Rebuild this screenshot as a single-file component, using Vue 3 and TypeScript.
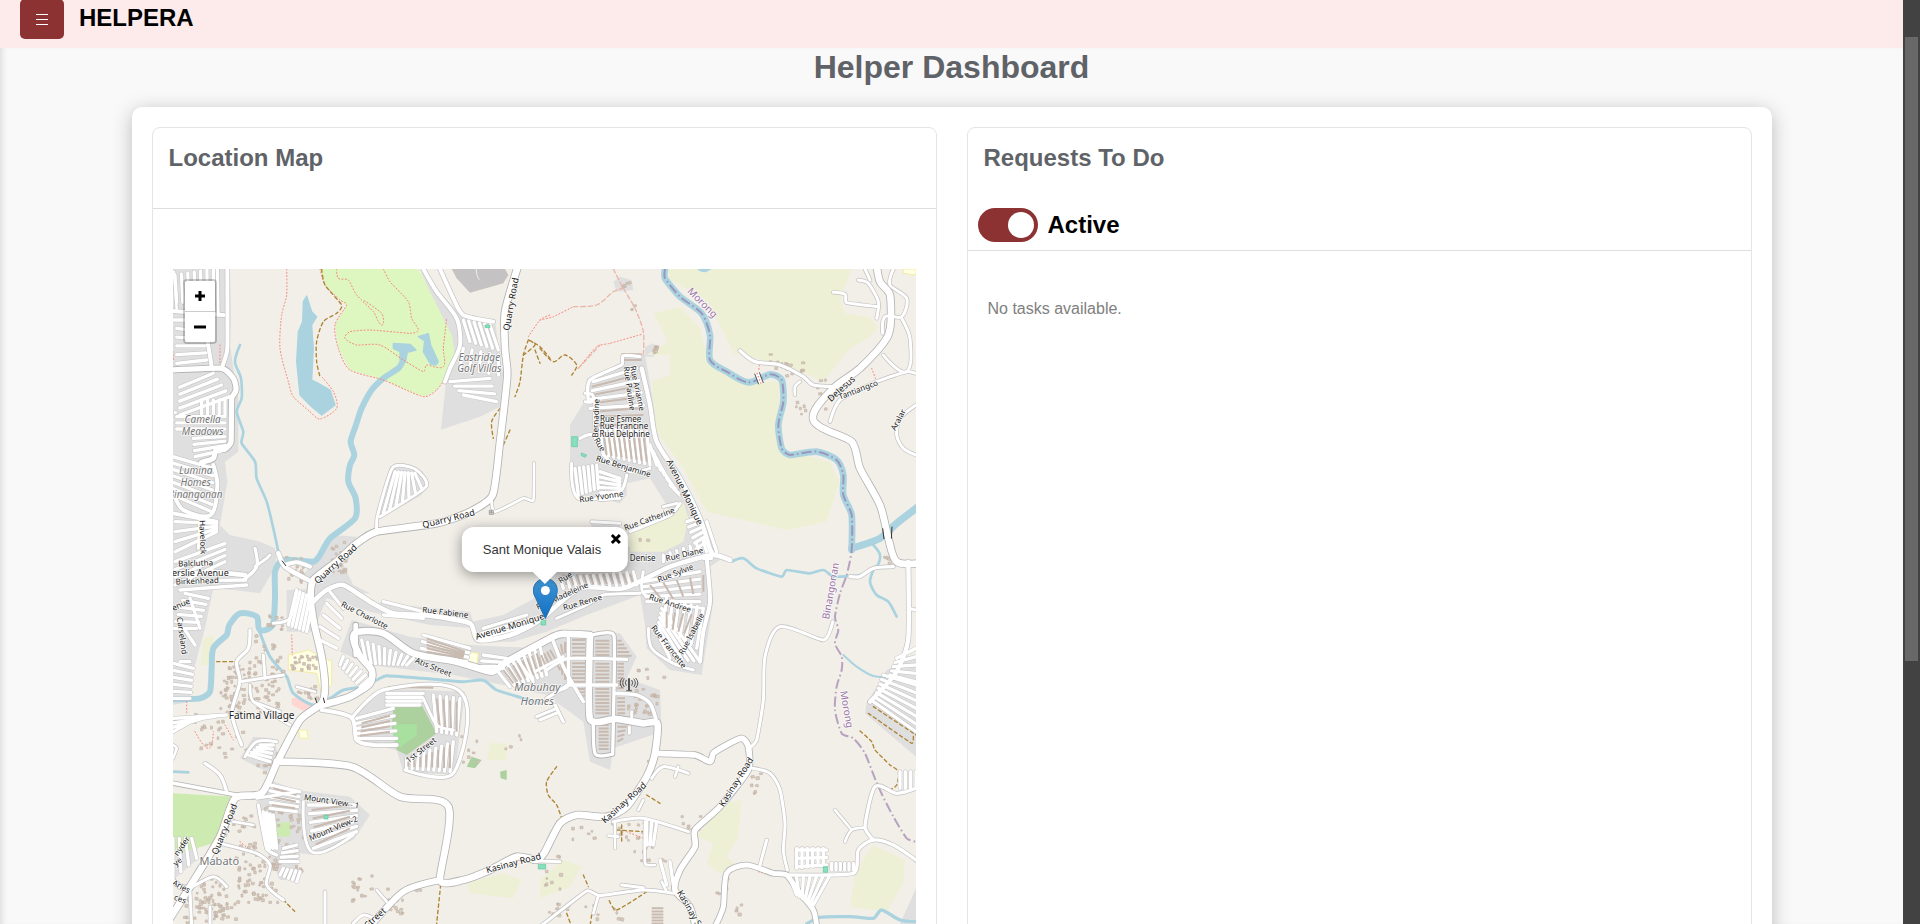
<script setup lang="ts">
import { ref } from 'vue'

type Pt = [number, number]
interface Line { d: string; w: number }
interface Label { t: string; x: number; y: number; r?: number; c?: string }

const active = ref(true)
const popupOpen = ref(true)

const parse = (s: string): Pt[] => s.trim().split(/\s+/).map(p => p.split(',').map(Number) as Pt)

/* Smooth curve through a list of points; tangents are limited by the shorter neighbouring segment */
function curve(s: string): string {
  const p = parse(s)
  const tangent = (i: number): Pt => {
    if (i === 0 || i === p.length - 1) return [0, 0]
    const a = p[i - 1], b = p[i], c = p[i + 1]
    const len = Math.hypot(c[0] - a[0], c[1] - a[1]) || 1
    const k = 0.28 * Math.min(Math.hypot(b[0] - a[0], b[1] - a[1]), Math.hypot(c[0] - b[0], c[1] - b[1])) / len
    return [(c[0] - a[0]) * k, (c[1] - a[1]) * k]
  }
  let d = `M${p[0][0]} ${p[0][1]}`
  for (let i = 0; i < p.length - 1; i++) {
    const b = p[i], c = p[i + 1], u = tangent(i), v = tangent(i + 1)
    d += `C${b[0] + u[0]} ${b[1] + u[1]} ${c[0] - v[0]} ${c[1] - v[1]} ${c[0]} ${c[1]}`
  }
  return d
}

/* n parallel segments spread between side a-b and side d-c of a quadrilateral */
function hatch(s: string, n: number): string {
  const [a, b, c, e] = parse(s)
  let d = ''
  for (let i = 0; i < n; i++) {
    const t = n === 1 ? 0.5 : i / (n - 1)
    d += `M${a[0] + (b[0] - a[0]) * t} ${a[1] + (b[1] - a[1]) * t}L${e[0] + (c[0] - e[0]) * t} ${e[1] + (c[1] - e[1]) * t}`
  }
  return d
}

let seed = 7
const rnd = () => (seed = (seed * 16807) % 2147483647) / 2147483647
function scatter(x: number, y: number, w: number, h: number, n: number): string {
  let d = ''
  for (let i = 0; i < n; i++) {
    const px = Math.round(x + rnd() * w), py = Math.round(y + rnd() * h)
    const a = 5 + Math.round(rnd() * 5), b = 5 + Math.round(rnd() * 4), k = Math.round(rnd() * 4) - 2
    d += `M${px} ${py}l${a} ${k}l${-k} ${b}l${-a} ${-k}z`
  }
  return d
}

const residential: string[] = [
  '9,12 180,12 182,150 180,240 190,310 205,400 205,560 165,590 172,650 150,780 180,810 270,830 315,850 320,900 290,950 270,985 190,975 130,970 105,1090 75,1200 60,1310 9,1320',
  '750,12 870,150 975,170 1000,330 990,425 930,455 813,494 830,330 855,270 840,210 790,110',
  '660,603 740,610 772,660 755,690 630,760 622,750',
  '490,810 560,815 520,900 550,960 600,985 430,985 400,930',
  '1355,265 1425,270 1455,440 1470,540 1530,620 1600,780 1650,880 1570,900 1490,720 1440,640 1370,655 1370,690 1350,715 1290,700 1220,690 1200,590 1200,480 1250,400 1250,340 1350,310',
  '1260,765 1350,770 1350,840 1400,850 1600,790 1650,885 1620,905 1630,1010 1595,1230 1500,1215 1430,1150 1425,1080 1410,990 1250,1050 1130,1100 1030,1130 920,1135 905,1070 1000,1050 1130,980 1150,920 1290,900',
  '1110,1120 1170,1100 1350,1105 1400,1175 1370,1240 1470,1275 1475,1400 1330,1450 1320,1515 1260,1490 1240,1370 1130,1290 1090,1240',
  '545,1065 720,1115 900,1140 1110,1150 1130,1290 1000,1260 850,1230 600,1200 510,1160',
  '540,1355 640,1270 885,1280 855,1530 700,1520 680,1455 560,1430',
  '300,1545 380,1575 540,1595 600,1650 550,1725 430,1770 390,1765 380,1845 330,1845 280,1735 260,1615',
  '9,1715 60,1700 85,1735 80,1785 9,1845',
  '2090,1315 2150,1215 2238,1170 2238,1475 2085,1345',
  '2238,1870 2190,1977 2238,1977',
  '210,1480 250,1415 310,1420 330,1490 290,1520',
  '1330,50 1350,35 1385,45 1390,75 1340,80',
  '1425,245 1450,235 1465,255 1450,275 1425,275',
  '350,975 500,970 600,1010 900,1040 915,1090 780,1080 600,1040 470,1000 430,1100 350,1100',
]
const farmland: string[] = [
  '1490,12 2045,12 2010,100 2025,145 2100,155 2125,190 2100,215 2040,250 2000,300 1960,350 1850,300 1690,265 1650,180 1600,100 1500,45',
  '1450,145 1530,125 1590,190 1615,290 1730,350 1830,350 1825,550 1980,590 2008,650 1970,770 1850,795 1610,740 1540,610 1460,500 1445,350 1500,330 1500,270 1430,270 1495,230',
  '1540,710 1555,760 1540,830 1480,860 1380,860 1380,790 1510,740',
  '1660,1615 1715,1605 1705,1715 1670,1775 1705,1805 1650,1825 1610,1795 1630,1735 1580,1715',
  '2110,1740 2205,1785 2200,1855 2150,1940 2040,1925 2055,1825',
  '890,1855 1000,1825 1055,1845 1030,1900 900,1885',
  '1110,1845 1180,1785 1235,1805 1200,1865 1110,1900',
  '960,1435 1010,1435 1010,1485 950,1485',
  '100,1120 135,1110 115,1200 92,1200',
]
const schools: string[] = [
  '355,1170 415,1155 485,1190 485,1260 455,1290 440,1225 355,1215',
  '890,1160 925,1165 920,1210 890,1200',
  '385,1395 410,1395 415,1420 390,1420',
  '2200,12 2238,12 2238,30 2200,25',
]
const golf = '450,12 745,12 760,40 845,210 855,270 825,340 800,375 765,395 720,380 640,345 540,315 505,250 495,180 530,120 510,105 465,60'
const grass = ['9,1585 195,1595 130,1735 9,1770', '320,1675 360,1670 360,1715 320,1715']
const woods = ['670,1325 755,1320 800,1405 710,1470 680,1455 665,1385', '905,1475 935,1485 915,1510 890,1505', '990,1520 1010,1515 1010,1545 992,1540']
const courts = ['1205,515 1222,515 1222,545 1205,545', '1113,1065 1127,1065 1127,1080 1113,1080', '462,1651 474,1651 474,1662 462,1662', '1105,1798 1127,1798 1127,1812 1105,1812', '1960,1805 1973,1805 1973,1822 1960,1822', '945,180 960,180 960,188 945,188', '1234,564 1250,570 1246,577 1234,572']
const ponds = [
  '410,93 425,140 440,155 425,180 430,250 425,345 445,355 480,375 495,420 455,450 425,425 390,390 380,290 385,200 398,170 400,110',
  '670,235 720,238 738,255 712,262 706,292 690,285 690,260 670,250',
  '745,215 762,210 775,205 782,240 805,290 798,300 782,298 760,260 764,228',
]

const rivers: Line[] = [
  { w: 18, d: '700,285 685,310 640,340 605,375 575,430 558,480 542,530 553,570 540,600 535,650 557,700 555,760 480,820 450,870 430,890 340,885 315,920 315,1000 308,1080 270,1095 260,1055 210,1045 178,1080 170,1110 130,1150 125,1210 120,1280 90,1300 9,1303' },
  { w: 8, d: '210,240 195,290 213,340 215,400 200,440 220,500 215,535 255,590 260,640 290,710 310,790 325,860' },
  { w: 9, d: '265,1090 300,1175 350,1235 370,1285 430,1320 480,1300 520,1275 575,1265 620,1245 650,1232 760,1240 880,1250 940,1246 980,1275 1060,1300 1110,1315' },
  { w: 20, d: '1485,12 1485,40 1530,95 1595,145 1620,210 1620,285 1670,320 1735,352 1800,328 1835,345 1840,410 1825,480 1835,550 1860,570 1940,560 2000,585 2020,630 2020,690 2045,750 2045,855' },
  { w: 22, d: '2045,850 2130,820 2180,775 2245,725' },
  { w: 8, d: '1685,890 1720,880 1760,910 1835,935 1850,915 1920,925 1960,915 1990,935 2070,930 2120,905 2130,870 2110,840' },
  { w: 8, d: '2115,905 2100,950 2120,990 2155,1010 2180,1055' },
  { w: 6, d: '2020,1170 2060,1205 2110,1233 2170,1237' },
  { w: 10, d: '1910,1977 1950,1957 2040,1955 2110,1960 2135,1935 2190,1965 2238,1970' },
  { w: 8, d: '9,1520 55,1522' },
  { w: 12, d: '1590,12 1605,16 1620,8' },
]
const border = '1485,12 1485,40 1530,95 1595,145 1620,210 1620,285 1670,320 1735,352 1800,328 1835,345 1840,410 1825,480 1835,550 1860,570 1940,560 2000,585 2020,630 2020,690 2045,750 2045,855 2030,930 2010,985 1995,1055 2005,1095 1995,1135 2015,1175 2015,1215 2000,1265 1995,1335 2015,1405 2050,1420 2085,1465 2125,1565 2170,1655 2210,1720 2238,1730'

const roads: Line[] = [
  { w: 12, d: '760,12 800,80 860,160 870,240 840,310 825,350' },
  { w: 12, d: '810,12 850,100 880,150 970,170' },
  { w: 12, d: '172,12 172,250 155,310' }, { w: 10, d: '142,12 144,150' },
  { w: 12, d: '108,200 125,305' }, { w: 12, d: '9,138 160,150' }, { w: 10, d: '9,165 60,165' }, { w: 8, d: '12,20 20,130' },
  { w: 12, d: '130,600 142,660 122,750 40,735 12,690' }, { w: 11, d: '9,745 140,770' }, { w: 9, d: '90,770 85,850' },
  { w: 10, d: '220,945 260,905 255,850' }, { w: 9, d: '255,905 290,880 300,870' }, { w: 14, d: '110,918 225,930' },
  { w: 14, d: '325,865 345,905 415,945' }, { w: 12, d: '345,900 380,892 420,905' },
  { w: 9, d: '620,800 622,755 668,608 735,612 768,665 630,755' },
  { w: 10, d: '1255,405 1260,345 1355,300 1360,272 1410,275' }, { w: 9, d: '1245,385 1268,390 1268,410 1245,410' },
  { w: 9, d: '1275,400 1275,490 1290,540' },
  { w: 13, d: '1415,310 1440,420 1460,530 1530,640 1590,760 1625,870' },
  { w: 9, d: '1230,520 1270,510 1310,580 1380,620 1440,610' },
  { w: 9, d: '1205,595 1225,700 1350,680 1370,630' }, { w: 8, d: '1290,705 1350,700' },
  { w: 9, d: '1265,770 1350,775' }, { w: 10, d: '1380,800 1500,750 1530,715' }, { w: 9, d: '1480,725 1520,715' },
  { w: 14, d: '430,1010 470,975 520,960 600,1010 670,1045 780,1052 900,1075 925,1125 1020,1110 1110,1065 1230,970 1360,970 1500,905 1625,870 1680,885' },
  { w: 9, d: '1160,1060 1250,1020 1300,990 1410,985' },
  { w: 9, d: '1420,920 1420,985 1500,1015 1600,1030' }, { w: 9, d: '1435,1090 1445,1150 1510,1195 1570,1215' },
  { w: 12, d: '1610,880 1620,1010 1600,1100 1590,1190' },
  { w: 10, d: '1710,257 1755,290 1830,300 1900,335 1930,360 1995,365' },
  { w: 8, d: '1890,350 1875,365 1875,390' },
  { w: 9, d: '1990,82 2025,88 2030,113 2125,125' }, { w: 9, d: '2065,45 2095,55 2125,110 2120,160' },
  { w: 9, d: '2085,12 2100,45' }, { w: 9, d: '2170,12 2160,60 2210,100 2195,155 2145,155 2138,205' },
  { w: 9, d: '2195,160 2220,220 2210,320 2140,270' }, { w: 9, d: '2238,325 2210,320 2120,350 2010,405 1980,470' },
  { w: 9, d: '2238,420 2190,460 2180,510 2200,550 2238,570' },
  { w: 10, d: '2040,935 2070,935 2110,910 2170,905' },
  { w: 13, d: '2215,890 2215,1120 2180,1220 2100,1310' }, { w: 9, d: '2215,1030 2238,1035' },
  { w: 9, d: '1988,1070 1960,1125 1830,1085 1785,1175 1780,1305 1760,1425 1738,1450' },
  { w: 9, d: '1740,1508 1800,1525 1830,1575 1845,1675 1840,1755 1852,1815' },
  { w: 10, d: '1850,1830 2050,1825 2065,1755 2110,1725 2170,1740 2238,1785' },
  { w: 10, d: '2110,1725 2085,1685 2115,1565 2180,1585 2238,1570' },
  { w: 8, d: '2085,1688 2045,1695 2025,1730' }, { w: 8, d: '2045,1695 1995,1635' },
  { w: 9, d: '1770,1800 1790,1725' },
  { w: 9, d: '1330,1670 1420,1660 1555,1700' }, { w: 8, d: '1425,1670 1425,1795 1455,1800' },
  { w: 8, d: '1335,1670 1335,1750' }, { w: 8, d: '1315,1712 1345,1715' },
  { w: 9, d: '1445,1540 1480,1505 1555,1525' }, { w: 8, d: '1525,1505 1515,1535' }, { w: 8, d: '1420,1605 1405,1635' },
  { w: 9, d: '1110,1985 1250,1878 1290,1892 1420,1875 1510,1885' }, { w: 8, d: '1285,1892 1270,1945' },
  { w: 9, d: '1355,1860 1420,1868' }, { w: 9, d: '1110,1788 1170,1790' }, { w: 8, d: '1490,1880 1475,1850' },
  { w: 11, d: '1335,1285 1400,1290 1440,1315 1460,1370' }, { w: 9, d: '1378,1385 1378,1405' }, { w: 9, d: '1385,1340 1385,1355' },
  { w: 9, d: '210,1250 340,1230' }, { w: 10, d: '240,1095 235,1150 200,1190 210,1250 185,1340 200,1400 215,1440' },
  { w: 9, d: '280,1170 285,1240' }, { w: 8, d: '380,1265 435,1280' }, { w: 8, d: '250,1310 330,1340' }, { w: 8, d: '240,1260 250,1310 360,1380' },
  { w: 9, d: '310,1075 360,1060 380,975' },
  { w: 10, d: '545,1360 640,1275 875,1285 850,1525 705,1515' }, { w: 12, d: '455,1335 545,1358 560,1425 610,1440 680,1440' },
  { w: 9, d: '760,1300 800,1380 850,1395' },
  { w: 10, d: '105,1495 150,1530 170,1580' }, { w: 9, d: '150,1735 260,1765 300,1800 290,1860 340,1905' },
  { w: 8, d: '190,1670 250,1680' }, { w: 9, d: '225,1475 260,1430 320,1430' }, { w: 9, d: '260,1600 380,1580' },
  { w: 9, d: '400,1610 425,1760 550,1710' }, { w: 9, d: '60,1870 130,1835 170,1865' },
  { w: 9, d: '465,1880 465,1985' }, { w: 8, d: '620,1875 650,1910' }, { w: 9, d: '550,1975 580,1950 610,1960' },
  { w: 10, d: '265,1620 290,1750 320,1770' }, { w: 9, d: '120,1925 120,1985' }, { w: 9, d: '60,1880 65,1985' }, { w: 8, d: '9,1480 20,1450 9,1440' },
  { w: 10, d: '1200,1255 1130,1300' }, { w: 10, d: '1155,1320 1180,1370' }, { w: 9, d: '1100,1355 1160,1330' }, { w: 9, d: '1110,1365 1165,1342' },
  { w: 11, d: '1150,1130 1185,1215 1240,1310' }, { w: 10, d: '1195,1115 1195,1260 1170,1275' }, { w: 10, d: '1130,1215 1195,1180 1370,1183' }, { w: 10, d: '1195,1260 1340,1260' },
  { w: 9, d: '1095,1220 1180,1175' }, { w: 9, d: '1040,1180 1090,1250' },
  { w: 8, d: '965,700 975,740 1060,700 1090,705 1092,595' },
]
const mainRoads: Line[] = [
  { w: 16, d: '0,315 155,310 190,340 198,375 185,400 183,530 165,552 138,555 130,580 95,592' },
  { w: 20, d: '1045,0 1005,140 1005,250 1012,330 990,530 968,690 900,740 800,775 620,800 560,835 500,890 430,945 422,1000 432,1075 455,1175 465,1265 455,1315 390,1365 320,1495 275,1585 195,1600 150,1715 60,1865 0,1960' },
  { w: 20, d: '455,1320 540,1295 600,1255 605,1215 565,1165 555,1105 640,1105 730,1165 860,1190 965,1220 1010,1190 1140,1120 1175,1107 1260,1110' },
  { w: 14, d: '557,1080 557,1170' },
  { w: 20, d: '320,1490 545,1505 690,1595 835,1625 810,1845 880,1845 960,1815 1040,1775 1100,1785 1125,1760 1170,1675 1220,1650 1310,1655 1370,1625 1430,1535 1455,1465 1462,1375 1420,1375 1340,1362 1260,1362 1260,1112' },
  { w: 17, d: '1455,1465 1575,1470 1620,1490 1630,1465 1670,1440 1715,1420 1735,1445 1735,1515 1650,1625 1575,1695 1575,1745 1530,1815 1515,1875 1560,1925 1575,1985' },
  { w: 15, d: '1635,1985 1660,1925 1670,1825 1730,1800 1810,1825 1850,1830 1890,1885 1930,1935 1940,1985' },
  { w: 18, d: '810,1845 700,1880 600,1985' },
  { w: 11, d: '0,1553 200,1590' },
  { w: 20, d: '2120,0 2130,50 2160,90 2155,210 2070,310 1990,370 1930,465 2045,530 2070,610 2130,720 2155,820 2180,890 2245,895' },
  { w: 10, d: '1260,1112 1332,1112 1328,1467' }, { w: 10, d: '1270,1365 1276,1467 1328,1467' },
  { w: 14, d: '0,1838 30,1865 60,1870' },
]

/* dense street grids: white lanes with thin kerb lines between them */
const grids: { q: string; n: number }[] = [
  { q: '15,30 130,12 130,120 20,110', n: 7 }, { q: '20,190 20,295 110,285 100,200', n: 5 },
  { q: '29,367 29,450 180,395 130,325', n: 5 }, { q: '95,405 165,405 165,450 95,450', n: 5 },
  { q: '20,455 20,492 165,492 165,455', n: 3 }, { q: '70,520 75,575 165,555 165,515', n: 4 },
  { q: '9,575 9,690 125,740 130,610', n: 7 }, { q: '20,345 12,540 12,540 20,345', n: 1 },
  { q: '15,770 15,860 140,800 140,775', n: 4 }, { q: '15,890 15,960 165,890 165,835', n: 4 },
  { q: '30,920 30,975 230,960 225,930', n: 3 }, { q: '45,985 10,1090 80,1090 115,1000', n: 6 },
  { q: '10,1195 10,1300 60,1300 70,1210', n: 6 }, { q: '60,1000 30,1190 60,1190 90,1090', n: 3 },
  { q: '880,165 960,180 985,255 900,230', n: 6 },
  { q: '880,250 985,270 985,330 870,310', n: 5 }, { q: '840,350 880,390 980,410 960,340', n: 4 },
  { q: '675,620 735,625 755,670 640,745', n: 7 }, { q: '1270,350 1260,430 1420,420 1400,310', n: 4 },
  { q: '1290,490 1430,500 1440,600 1300,570', n: 10 }, { q: '1215,610 1280,600 1285,670 1225,690', n: 6 },
  { q: '1290,620 1290,700 1350,690 1350,640', n: 6 }, { q: '1440,540 1500,660 1530,690 1460,600', n: 7 },
  { q: '1550,770 1580,850 1610,830 1580,760', n: 6 }, { q: '1480,870 1600,830 1610,860 1480,890', n: 7 },
  { q: '1170,940 1390,920 1400,960 1180,970', n: 12 }, { q: '1420,950 1430,1010 1590,1010 1590,920', n: 5 },
  { q: '1610,770 1600,880 1625,880 1640,860', n: 3 }, { q: '1475,1030 1460,1100 1500,1180 1590,1190', n: 6 },
  { q: '1490,1000 1600,1030 1580,1150 1480,1080', n: 7 },
  { q: '575,1125 730,1180 710,1200 590,1195', n: 10 },
  { q: '760,1110 750,1170 890,1190 900,1150', n: 4 }, { q: '940,1170 930,1205 1000,1205 1010,1180', n: 3 }, { q: '980,1215 1110,1145 1130,1230 1020,1265', n: 9 },
  { q: '520,1175 600,1240 570,1265 510,1200', n: 7 }, { q: '560,1360 560,1420 680,1420 670,1330', n: 5 },
  { q: '650,1285 650,1320 750,1320 760,1285', n: 4 }, { q: '790,1290 870,1300 860,1410 800,1400', n: 5 },
  { q: '710,1480 850,1430 840,1520 710,1510', n: 9 }, { q: '480,980 440,1120 500,1150 520,1030', n: 5 },
  { q: '355,1080 410,1100 430,1000 380,975', n: 6 }, { q: '300,1560 300,1630 380,1640 390,1580', n: 5 },
  { q: '415,1620 430,1750 560,1700 560,1620', n: 6 }, { q: '340,1750 330,1790 385,1790 380,1740', n: 4 },
  { q: '280,1640 310,1650 320,1750 290,1750', n: 4 }, { q: '340,1810 390,1820 380,1850 330,1830', n: 5 },
  { q: '235,1470 270,1440 310,1440 300,1490', n: 5 }, { q: '9,1720 65,1720 80,1780 9,1840', n: 4 },
  { q: '1880,1750 1960,1750 1960,1800 1880,1810', n: 6 }, { q: '1880,1755 1880,1805 1970,1800 1970,1755', n: 3 }, { q: '1860,1840 1980,1830 1930,1920 1880,1890', n: 7 },
  { q: '1985,1795 2050,1795 2050,1815 1985,1815', n: 6 }, { q: '2140,1230 2110,1310 2238,1400 2238,1260', n: 7 },
  { q: '2180,1180 2160,1230 2238,1250 2238,1150', n: 5 }, { q: '1430,1670 1460,1670 1450,1740 1430,1740', n: 3 },
  { q: '2190,1520 2238,1520 2238,1570 2190,1570', n: 4 }, { q: '10,1360 10,1400 80,1360 170,1350', n: 4 },
  { q: '940,1090 930,1120 1080,1080 1070,1050', n: 3 }, { q: '640,1010 640,1050 760,1060 760,1040', n: 2 },
  { q: '1470,1785 1500,1790 1510,1860 1490,1860', n: 2 },
]
const houseRows: { q: string; n: number }[] = [
  { q: '1276,1127 1276,1170 1318,1170 1318,1127', n: 5 }, { q: '1276,1196 1276,1250 1318,1250 1318,1196', n: 6 },
  { q: '1276,1272 1276,1345 1318,1345 1318,1272', n: 8 }, { q: '1286,1380 1286,1452 1316,1452 1316,1380', n: 8 },
  { q: '1206,1125 1206,1172 1246,1172 1246,1125', n: 5 }, { q: '1206,1195 1206,1250 1246,1250 1246,1195', n: 6 },
  { q: '1220,1272 1235,1292 1246,1292 1246,1272', n: 3 },
  { q: '1342,1127 1342,1172 1385,1172 1355,1127', n: 5 }, { q: '1342,1196 1342,1270 1362,1270 1362,1196', n: 8 },
  { q: '1342,1300 1342,1345 1365,1345 1365,1300', n: 5 }, { q: '1342,1385 1342,1430 1360,1420 1370,1385', n: 4 },
  { q: '1105,1175 1140,1155 1155,1180 1115,1205', n: 5 }, { q: '1160,1145 1185,1130 1185,1165 1172,1170', n: 3 }, { q: '1160,1195 1185,1190 1185,1245 1170,1215', n: 3 },
  { q: '1265,365 1270,440 1410,430 1400,330', n: 4 }, { q: '1300,500 1420,510 1430,590 1310,570', n: 9 },
  { q: '1280,455 1280,480 1420,480 1420,450', n: 2 }, { q: '1480,1010 1600,980 1600,930 1440,960', n: 5 },
  { q: '1500,600 1530,690 1545,680 1510,590', n: 7 }, { q: '770,1120 770,1160 880,1180 885,1160', n: 5 },
  { q: '575,1375 570,1412 660,1400 660,1352', n: 4 }, { q: '425,1635 437,1738 540,1690 540,1620', n: 5 },
  { q: '1000,1215 1100,1165 1115,1220 1030,1255', n: 8 }, { q: '800,1300 860,1310 860,1400 810,1390', n: 4 },
  { q: '715,1490 840,1440 840,1510 715,1505', n: 8 }, { q: '1445,1930 1445,1985 1480,1985 1480,1930', n: 7 },
  { q: '1355,268 1355,285 1415,285 1415,268', n: 2 }, { q: '655,1266 655,1266 790,1268 790,1268', n: 1 },
  { q: '1180,928 1380,926 1390,955 1190,960', n: 11 }, { q: '310,1570 305,1620 375,1630 380,1590', n: 3 },
  { q: '1490,1040 1590,1050 1560,1110 1490,1090', n: 5 },
]
const houses = [
  [150, 1180, 60, 160, 40], [215, 1210, 110, 130, 40], [250, 1110, 80, 90, 14], [290, 1040, 50, 60, 12], [470, 820, 60, 100, 24],
  [340, 870, 70, 80, 18], [360, 1170, 80, 50, 22], [380, 1260, 60, 40, 14], [150, 1650, 110, 130, 30], [200, 1780, 120, 130, 56],
  [70, 1830, 90, 120, 40], [20, 1880, 180, 90, 36], [90, 1390, 160, 90, 14], [260, 1460, 80, 60, 18], [270, 1620, 130, 200, 56],
  [1370, 1270, 90, 90, 28], [1790, 260, 60, 50, 14], [1840, 290, 60, 40, 8], [1860, 380, 50, 70, 6], [1940, 340, 60, 90, 10],
  [540, 1820, 70, 110, 14], [640, 1860, 80, 100, 14], [1120, 1770, 60, 100, 10], [1180, 1680, 90, 40, 6], [1530, 1640, 60, 60, 8],
  [1730, 1520, 40, 80, 7], [1620, 1830, 60, 60, 6], [980, 1400, 100, 60, 4], [870, 1400, 50, 90, 7], [1400, 1210, 90, 30, 5],
  [1240, 1910, 120, 50, 8], [1130, 1900, 80, 70, 8], [1380, 1740, 110, 60, 8], [1320, 1670, 110, 60, 12], [230, 1180, 120, 90, 16],
  [1445, 240, 16, 24, 8], [1345, 50, 30, 18, 5], [1380, 120, 12, 30, 3], [2140, 870, 20, 30, 4], [730, 1850, 30, 24, 6],
  [1390, 818, 40, 8, 2], [1430, 1480, 20, 70, 6], [30, 1340, 130, 60, 12], [1690, 1900, 30, 60, 4],
].map(([x, y, w, h, n]) => scatter(x, y, w, h, n)).join('')

const footpaths = [
  '350,12 350,90 335,150 330,250 355,350 370,395 420,440 450,462 500,430 490,380 455,335', '500,12 505,40 535,45 560,90 610,140 635,180 635,145 580,105',
  '640,12 660,50 715,110 725,160 745,195 720,205 600,195 540,200 525,220 560,240 630,240 700,285 760,320 770,300 820,305 820,250 830,160',
  '450,12 465,60 510,105 530,120 495,180 505,250 540,315 640,345 720,380 765,395 800,375 830,335',
  '1110,165 1150,155 1210,125', '1225,310 1280,245 1320,235 1415,208', '1075,215 1110,165 1140,150', '150,240 150,300', '9,260 10,285',
  '75,1400 115,1450 130,1400', '165,1380 190,1425', '1768,300 1766,318', '2105,310 2120,350', '1370,1700 1420,1720', '210,1730 240,1755', '1765,1820 1800,1830', '365,1110 367,1170', '50,1310 50,1345',
]
const shrubPaths = ['1330,12 1360,70 1395,130 1420,200 1420,270', '1210,125 1280,120 1330,80 1365,68', '1225,310 1290,240']
const tracks = [
  '455,12 465,60 515,120 500,145 460,170 440,230 440,290 450,335', '1075,225 1060,270 1050,350 1035,395', '1060,270 1095,240 1075,225 1110,245 1140,280', '1095,255 1110,295',
  '1110,250 1150,290 1185,270 1220,300 1205,330', '990,430 965,470 970,520', '1020,495 1000,540', '140,1190 195,1190',
  '1160,1505 1130,1550 1135,1590 1160,1620 1175,1660', '2110,1325 2238,1410', '2095,1345 2225,1435 2230,1410', '2070,1398 2105,1430 2115,1455 2160,1500 2185,1520 2180,1560 2160,1575',
  '812,1860 800,1975', '340,1905 380,1945', '1240,1830 1255,1865', '1430,1880 1340,1935 1315,1900', '1190,1945 1205,1985', '1430,1590 1470,1615', '1355,1680 1355,1730', '1340,1695 1420,1700', '1265,1950 1260,1985',
]

const labels: Label[] = [
  { t: 'Quarry Road', x: 1032, y: 119, r: -80, c: 'road' }, { t: 'Quarry Road', x: 838, y: 770, r: -14, c: 'road' },
  { t: 'Quarry Road', x: 503, y: 904, r: -42, c: 'road' }, { t: 'Quarry Road', x: 172, y: 1696, r: -68, c: 'road' },
  { t: 'Eastridge', x: 928, y: 287, c: 'area' }, { t: 'Golf Villas', x: 928, y: 322, c: 'area' },
  { t: 'Camella', x: 98, y: 475, c: 'area' }, { t: 'Meadows', x: 98, y: 510, c: 'area' },
  { t: 'Lumina', x: 77, y: 627, c: 'area' }, { t: 'Homes', x: 77, y: 662, c: 'area' }, { t: 'Binangonan', x: 76, y: 698, c: 'area' },
  { t: 'Havelock', x: 90, y: 817, r: 88 }, { t: 'Balclutha', x: 77, y: 903, r: -2 }, { t: 'erslie Avenue', x: 91, y: 932, c: 'road' }, { t: 'Birkenhead', x: 82, y: 956, r: -2 },
  { t: 'Morong', x: 1590, y: 120, r: 45, c: 'edge' }, { t: 'DeJesus', x: 2020, y: 378, r: -42, c: 'road' }, { t: 'Tantiangco', x: 2068, y: 382, r: -21 },
  { t: 'Aralar', x: 2192, y: 468, r: -62 }, { t: 'Rue Arianne', x: 1394, y: 372, r: 78 }, { t: 'Rue Pauline', x: 1370, y: 372, r: 82 },
  { t: 'Bernadine', x: 1286, y: 460, r: -88 }, { t: 'Rue', x: 1282, y: 543, r: 60 }, { t: 'Rue Esmee', x: 1352, y: 470 }, { t: 'Rue Francine', x: 1362, y: 493 },
  { t: 'Rue Delphine', x: 1364, y: 516 }, { t: 'Rue Benjamine', x: 1358, y: 612, r: 17 }, { t: 'Rue Yvonne', x: 1295, y: 703, r: -8 },
  { t: 'Avenue Monique', x: 1536, y: 685, r: 64, c: 'road' }, { t: 'Rue Catherine', x: 1441, y: 770, r: -20 }, { t: 'Denise', x: 1418, y: 887 },
  { t: 'Rue Diane', x: 1545, y: 876, r: -13 }, { t: 'Rue Sylvie', x: 1519, y: 932, r: -21 }, { t: 'Rue', x: 1190, y: 945, r: -32 },
  { t: 'Rue Madeleine', x: 1180, y: 1000, r: -24 }, { t: 'Rue Renee', x: 1240, y: 1020, r: -16 }, { t: 'Avenue Monique', x: 1022, y: 1093, r: -17, c: 'road' },
  { t: 'Binangonan', x: 1992, y: 980, r: -80, c: 'edge' }, { t: 'enue', x: 36, y: 1026, r: -25 }, { t: 'Carseland', x: 28, y: 1113, r: 82 },
  { t: 'Rue Charlotte', x: 580, y: 1058, r: 27 }, { t: 'Rue Fabiene', x: 825, y: 1050, r: 7 }, { t: 'Atis Street', x: 787, y: 1214, r: 22 },
  { t: 'Mabuhay', x: 1102, y: 1278, c: 'area large' }, { t: 'Homes', x: 1102, y: 1320, c: 'area large' },
  { t: 'Fatima Village', x: 275, y: 1361, c: 'place' }, { t: '1st Street', x: 758, y: 1462, r: -38 }, { t: 'Mount View - 1', x: 484, y: 1617, r: 9 },
  { t: 'Mount View-2', x: 493, y: 1698, r: -23 }, { t: 'Mabato', x: 148, y: 1799, c: 'hamlet' }, { t: 'Kasinay Road', x: 1033, y: 1803, r: -15, c: 'road' },
  { t: 'Kasinay Road', x: 1368, y: 1620, r: -42, c: 'road' }, { t: 'Kasinay Road', x: 1706, y: 1556, r: -58, c: 'road' }, { t: 'Kasinay Street', x: 1565, y: 1960, r: 60, c: 'road' },
  { t: '1st Street', x: 605, y: 1980, r: -42, c: 'road' }, { t: 'nyder', x: 42, y: 1748, r: -55 }, { t: 'ye', x: 28, y: 1796, r: -40 }, { t: 'Aries', x: 30, y: 1872, r: 28 }, { t: 'ces', x: 28, y: 1910, r: 20 },
  { t: 'Rue Andree', x: 1498, y: 1023, r: 18 }, { t: 'Rue Isabelle', x: 1572, y: 1110, r: -62 }, { t: 'Rue Francette', x: 1490, y: 1150, r: 52 },
  { t: 'Morong', x: 2020, y: 1335, r: 80, c: 'edge' },
]
</script>

<template>
  <div class="app">
    <div class="page">
      <header class="topbar">
        <button class="menu" type="button" aria-label="Open menu">
          <svg width="12" height="12" viewBox="0 0 12 12" aria-hidden="true"><path d="M0 1h12M0 6h12M0 11h12" stroke="#fff" shape-rendering="crispEdges" /></svg>
        </button>
        <span class="brand">HELPERA</span>
      </header>

      <main class="content">
        <h1>Helper Dashboard</h1>
        <div class="board">
          <section class="panel">
            <div class="panel-head"><h2>Location Map</h2></div>
            <div class="map-body">
              <div class="map">
                <svg class="tiles" viewBox="9 12 2229 2280" preserveAspectRatio="xMidYMin slice" role="img" aria-label="Street map">
                  <rect x="-2000" y="0" width="6000" height="2400" fill="#f2efe9" />
                  <g fill="#e0dfdf"><polygon v-for="p in residential" :key="p" :points="p" /></g>
                  <polygon points="845,12 860,40 900,83 1000,55 1015,30 1005,12" fill="#c4c2c2" />
                  <path d="M918 12q2 25 10 32" fill="none" stroke="#eee" stroke-width="3" />
                  <g fill="#eef0d5"><polygon v-for="p in farmland" :key="p" :points="p" /></g>
                  <g fill="#ffffe5" stroke="#f3eda0" stroke-width="3"><polygon v-for="p in schools" :key="p" :points="p" /></g>
                  <polygon :points="golf" fill="#def6c0" />
                  <g fill="#cdebb0"><polygon v-for="p in grass" :key="p" :points="p" /></g>
                  <g fill="#add19e"><polygon v-for="p in woods" :key="p" :points="p" /></g>
                  <polygon points="672,1378 740,1378 740,1410 700,1440 690,1450 668,1420" fill="#a8e09f" />
                  <polygon points="365,1300 385,1295 435,1325 400,1338 365,1320" fill="#ffd6d1" />
                  <g fill="#aad3df" stroke="#aad3df" stroke-width="4" stroke-linejoin="round"><polygon v-for="p in ponds" :key="p" :points="p" /></g>
                  <g class="line" stroke="#aad3df"><path v-for="r in rivers" :key="r.d" :d="curve(r.d)" :stroke-width="r.w" /></g>
                  <path class="line border" :d="curve(border)" />
                  <path :d="houses" fill="#d6cac0" stroke="#c2b3a6" stroke-width="2" />
                  <g class="line walk"><path v-for="p in footpaths" :key="p" :d="curve(p)" /></g>
                  <g class="line shrub"><path v-for="p in shrubPaths" :key="p" :d="curve(p)" /></g>
                  <g class="line track"><path v-for="p in tracks" :key="p" :d="curve(p)" /></g>

                  <g class="line" stroke="#c3c2c2">
                    <path v-for="g in grids" :key="g.q" :d="hatch(g.q, g.n)" stroke-width="13" />
                    <path v-for="r in roads" :key="r.d" :d="curve(r.d)" :stroke-width="r.w + 4" />
                  </g>
                  <g class="line" stroke="#b4b3b3"><path v-for="r in mainRoads" :key="r.d" :d="curve(r.d)" :stroke-width="r.w + 5" /></g>
                  <g class="line" stroke="#fff"><path v-for="g in grids" :key="g.q" :d="hatch(g.q, g.n)" stroke-width="10" /></g>
                  <g class="rows"><path v-for="g in houseRows" :key="g.q" :d="hatch(g.q, g.n)" /></g>
                  <g class="line" stroke="#fff">
                    <path v-for="r in roads" :key="r.d" :d="curve(r.d)" :stroke-width="r.w" />
                    <path v-for="r in mainRoads" :key="r.d" :d="curve(r.d)" :stroke-width="r.w" />
                  </g>
                  <g fill="#88dfbe" stroke="#5cc79c" stroke-width="2"><polygon v-for="p in courts" :key="p" :points="p" /></g>

                  <path d="M958 736h12v12h-12zM962 740h4v4h-4z" fill="none" stroke="#777" stroke-width="2" />
                  <path d="M1761 324l12 32" stroke="#fff" stroke-width="12" />
                  <path d="M1761 324l12 32" stroke="#fa8072" stroke-width="4" stroke-dasharray="4 6" />
                  <path d="M1754 326l12 32M1768 322l12 32" stroke="#555" stroke-width="3" />
                  <path d="M336 887l12 16M2138 790l4 32M2166 785l-2 36M435 1298l6 16M460 1298l4 16" stroke="#333" stroke-width="3" />
                  <g fill="none" stroke="#555" stroke-width="3">
                    <path d="M1377 1240v36" stroke-width="6" /><path d="M1369 1277h16" />
                    <path d="M1369 1245q-6 8 0 17M1385 1245q6 8 0 17M1363 1241q-10 12 0 25M1391 1241q10 12 0 25M1357 1239q-13 14 0 30M1397 1239q13 14 0 30" />
                  </g>
                  <g class="labels">
                    <text v-for="(l, i) in labels" :key="i" :class="l.c" :transform="`translate(${l.x} ${l.y}) rotate(${l.r ?? 0})`">{{ l.t }}</text>
                  </g>
                </svg>

                <div class="zoom">
                  <button type="button" aria-label="Zoom in"><svg width="12" height="12" viewBox="0 0 12 12"><path d="M6 1v10M1 6h10" /></svg></button>
                  <button type="button" aria-label="Zoom out"><svg width="12" height="12" viewBox="0 0 12 12"><path d="M0 6h12" /></svg></button>
                </div>

                <div class="spot">
                  <div v-if="popupOpen" class="popup">
                    Sant Monique Valais
                    <button type="button" class="close" aria-label="Close popup" @click="popupOpen = false">
                      <svg width="12" height="12" viewBox="0 0 12 12"><path d="M2 2l8 8M10 2l-8 8" stroke="#000" stroke-width="3" /></svg>
                    </button>
                  </div>
                  <svg class="pin" width="25" height="41" viewBox="0 0 25 41" aria-hidden="true">
                    <defs><linearGradient id="pin" x1="0" y1="0" x2="0" y2="1"><stop offset="0" stop-color="#3f95d2" /><stop offset="1" stop-color="#126fc6" /></linearGradient></defs>
                    <path d="M12.500 .5C5.500 .5.500 6 .500 12.500c0 3 1 5.500 2.500 8L12.500 40.500 22 20.500c1.500-2.500 2.500-5 2.500-8C24.500 6 19.500.5 12.500.5z" fill="url(#pin)" stroke="#2a6fa8" />
                    <circle cx="12.500" cy="12.500" r="4.500" fill="#fff" />
                  </svg>
                </div>
              </div>
            </div>
          </section>

          <section class="panel">
            <div class="panel-head requests">
              <h2>Requests To Do</h2>
              <label class="switch">
                <input v-model="active" type="checkbox" role="switch">
                <span>{{ active ? 'Active' : 'Inactive' }}</span>
              </label>
            </div>
            <p class="empty">No tasks available.</p>
          </section>
        </div>
      </main>
    </div>
    <div class="scrollbar" aria-hidden="true"><div class="thumb"></div></div>
  </div>
</template>

<style>
body { margin: 0; overflow: hidden; }
</style>

<style scoped>
* { box-sizing: border-box; }
.app { display: flex; height: 100vh; overflow: hidden; font-family: "Liberation Sans", Arial, sans-serif; background: #f9f9f9; }
.page { flex: 1; min-width: 0; display: flex; flex-direction: column; overflow: hidden; }
.topbar { flex: none; height: 48px; display: flex; align-items: flex-start; gap: 15px; padding: 0 20px; background: #fdeaea; }
.menu { width: 44px; height: 40px; margin: -1px 0 0; padding: 0; border: 0; border-radius: 5px; background: #8c3232; display: flex; align-items: center; justify-content: center; }
.brand { font-size: 24px; line-height: 36px; font-weight: 700; color: #000; }
.content { flex: 1; min-height: 0; padding: 0 20px; overflow: hidden; box-shadow: inset 6px 0 6px -4px rgba(0, 0, 0, .12); }
h1 { margin: 0; font-size: 32px; line-height: 38px; font-weight: 700; text-align: center; color: #5f6368; }
.board { display: grid; grid-template-columns: 1fr 1fr; gap: 30px; max-width: 1640px; margin: 21px auto 0; padding: 20px; background: #fff; border-radius: 10px; box-shadow: 0 4px 20px rgba(0, 0, 0, .25); }
.panel { min-width: 0; border: 1px solid #e5e5e5; border-radius: 8px; background: #fff; }
.panel-head { height: 81px; padding: 16px; border-bottom: 1px solid #dedede; }
h2 { margin: 0; font-size: 24px; line-height: 28px; font-weight: 700; color: #5f6368; }
.requests { height: 123px; padding: 16px 10px 8px; display: flex; flex-direction: column; justify-content: space-between; }
.requests h2 { padding-left: 6px; }
.switch { display: flex; align-items: center; gap: 10px; font-size: 24px; line-height: 34px; font-weight: 700; color: #000; }
.switch input { appearance: none; width: 60px; height: 34px; margin: 0; padding: 4px; border-radius: 17px; background: #ccc; display: flex; }
.switch input::before { content: ""; width: 26px; height: 26px; border-radius: 50%; background: #fff; }
.switch input:checked { background: #8c3232; justify-content: flex-end; }
.empty { margin: 0; padding: 48px 20px; font-size: 16px; line-height: 20px; color: #808080; }
.map-body { padding: 60px 20px 20px; }
.map { position: relative; height: 760px; overflow: hidden; background: #f2efe9; }
.tiles { display: block; width: 100%; height: 100%; }
.line { fill: none; stroke-linecap: round; stroke-linejoin: round; }
.border { stroke: #8f6fa5; stroke-opacity: .6; stroke-width: 6; stroke-dasharray: 30 9 5 9; stroke-linecap: butt; }
.walk { stroke: #fa8072; stroke-width: 3; stroke-dasharray: 3 7; }
.shrub { stroke: #eab6ab; stroke-width: 4; stroke-dasharray: 14 8; }
.track { stroke: #ac8331; stroke-width: 4; stroke-dasharray: 10 9; }
.rows { fill: none; stroke: #c8bab0; stroke-width: 6; }
.labels text { font-family: "Noto Sans", sans-serif; font-size: 24px; fill: #222; text-anchor: middle; paint-order: stroke; stroke: rgba(255, 255, 255, .75); stroke-width: 5px; stroke-linejoin: round; }
.labels .road { font-size: 27px; }
.labels .area { font-size: 30px; font-style: italic; fill: #777; }
.labels .large { font-size: 33px; }
.labels .edge { font-size: 30px; fill: #9a72a8; }
.labels .place { font-size: 30px; }
.labels .hamlet { font-size: 33px; fill: #777; }
.zoom { position: absolute; top: 10px; left: 10px; display: flex; flex-direction: column; border: 2px solid rgba(0, 0, 0, .2); border-radius: 4px; background-clip: padding-box; }
.zoom button { width: 30px; height: 30px; padding: 0; border: 0; background: #fff; display: flex; align-items: center; justify-content: center; }
.zoom button:first-child { height: 31px; border-bottom: 1px solid #ccc; border-radius: 2px 2px 0 0; }
.zoom button:last-child { border-radius: 0 0 2px 2px; }
.zoom path { stroke: #000; stroke-width: 3; }
.spot { position: absolute; left: calc(50% + 1px); top: 258px; transform: translateX(-50%); display: flex; flex-direction: column; align-items: center; }
.popup { position: relative; z-index: 1; padding: 14px 27px 13px 21px; border-radius: 12px; background: #fff; color: #333; font-size: 13px; line-height: 18px; white-space: nowrap; box-shadow: 0 3px 14px rgba(0, 0, 0, .4); }
.popup::after { content: ""; position: absolute; left: 50%; top: 100%; transform: translateX(-50%); border: 12px solid transparent; border-top-color: #fff; border-bottom: 0; }
.close { position: absolute; top: 0; right: 0; width: 24px; height: 24px; padding: 0; border: 0; background: none; display: flex; align-items: center; justify-content: center; }
.pin { display: block; margin-top: 6px; }
.scrollbar { flex: none; width: 17px; padding: 37px 2px 0; background: #424242; }
.thumb { height: 624px; background: #686868; }
</style>
